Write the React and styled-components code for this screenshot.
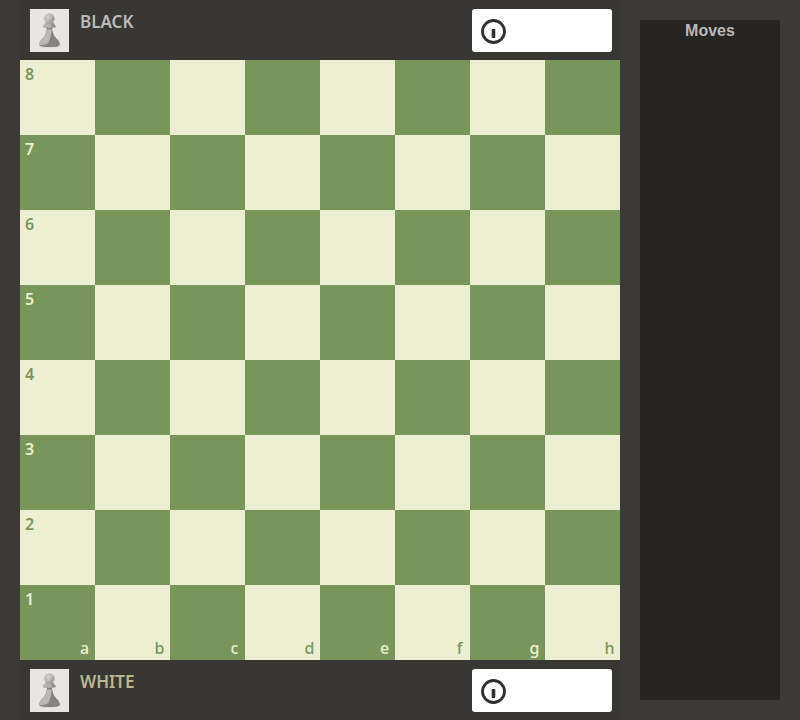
import React from "react";
import styled, { createGlobalStyle } from "styled-components";

const GlobalStyle = createGlobalStyle`
  *, *::before, *::after { box-sizing: border-box; }
  body {
    margin: 0;
    background: #3c3a36;
    font-family: "Noto Sans", "Open Sans", sans-serif;
  }
`;

const Page = styled.main`
  display: grid;
  grid-template-columns: minmax(0, 1fr) 140px;
  gap: 20px;
  padding: 0 20px;
  min-height: 100vh;
`;

const Game = styled.section`
  background: #393733;
  align-self: start;
`;

const PlayerBar = styled.div`
  display: flex;
  height: 60px;
  padding: 9px 8px 8px 10px;
`;

const Avatar = styled.svg`
  display: block;
  width: 39px;
  height: 43px;
  background: #e7e6e5;
`;

const PlayerName = styled.h2`
  margin: 0 auto 0 11px;
  padding-top: 1px;
  font-size: 17px;
  line-height: 24px;
  font-weight: 600;
  color: ${(p) => p.$color};
`;

const Clock = styled.div`
  display: flex;
  align-items: center;
  width: 140px;
  height: 43px;
  padding: 1px 0 0 9px;
  border-radius: 3px;
  background: #fff;
`;

const ClockIcon = styled.svg`
  display: block;
  width: 25px;
  height: 25px;
`;

const Board = styled.div`
  display: grid;
  grid-template-columns: repeat(8, 1fr);
  grid-template-rows: repeat(8, 1fr);
  aspect-ratio: 1;
`;

const Square = styled.div`
  display: flex;
  flex-direction: column;
  justify-content: space-between;
  min-width: 0;
  min-height: 0;
  padding: 4px 5px 2px;
  background: ${(p) => (p.$dark ? "#789659" : "#eeeed2")};
  color: ${(p) => (p.$dark ? "#eeeed2" : "#789659")};
  font-size: 16px;
  line-height: 20px;
  font-weight: 500;
`;

const Rank = styled.span`
  font-weight: 600;
`;

const File = styled.span`
  width: 11px;
  margin: auto 0 0 auto;
  text-align: center;
`;

const MovesPanel = styled.aside`
  margin: 20px 0;
  background: #272521;
`;

const MovesTitle = styled.h2`
  margin: 0;
  font-family: "Liberation Sans", Arial, sans-serif;
  font-size: 16px;
  line-height: 22px;
  font-weight: 700;
  text-align: center;
  color: #bababa;
`;

const FILES = ["a", "b", "c", "d", "e", "f", "g", "h"];
const RANKS = [8, 7, 6, 5, 4, 3, 2, 1];

function Pawn() {
  return (
    <Avatar viewBox="0 0 39 43" aria-hidden="true">
      <ellipse cx="19.5" cy="37" rx="10" ry="1.6" fill="#cfcecd" />
      <path d="M17 18h5c.5 6 2 9 5 12 2 2 3 4 3 6-2 1.8-5 2-10.5 2S11 37.8 9 36c0-2 1-4 3-6 3-3 4.5-6 5-12z" fill="#858481" />
      <path d="M17 20.5h4.5c0 5-1.5 9-2.5 12-.5 2-3 3.5-10 3.5 0-2 1-4 3-6 3-3 4.5-5.5 5-9.5z" fill="#bab9b6" />
      <path d="M16 13h7c.5 2 3 3 3 5-3 1.3-10 1.3-13 0 0-2 2.5-3 3-5z" fill="#92918e" />
      <path d="M16 13h4l2 5.5c-3 .3-7 .2-9-.5 0-2 2.5-3 3-5z" fill="#b4b3b0" />
      <circle cx="19.5" cy="9.6" r="5.2" fill="#a5a4a1" />
      <path d="M19.5 4.4a5.2 5.2 0 0 0-4 8.5c4 .5 7-2.5 7.5-7a5.2 5.2 0 0 0-3.5-1.5z" fill="#bcbbb8" />
      <ellipse cx="18" cy="7.8" rx="1.8" ry="2.2" fill="#d0cfcd" />
    </Avatar>
  );
}

function Player({ name, color }) {
  return (
    <PlayerBar>
      <Pawn />
      <PlayerName $color={color}>{name}</PlayerName>
      <Clock role="timer" aria-label={`${name} clock`}>
        <ClockIcon viewBox="0 0 25 25" aria-hidden="true">
          <circle cx="12.5" cy="12.5" r="11" fill="none" stroke="#312e2b" strokeWidth="2.8" />
          <rect x="10.7" y="10" width="3.6" height="9" rx="1" fill="#312e2b" />
        </ClockIcon>
      </Clock>
    </PlayerBar>
  );
}

export default function App() {
  return (
    <>
      <GlobalStyle />
      <Page>
        <Game>
          <Player name="BLACK" color="#bbbbb8" />
          <Board>
            {RANKS.map((rank, row) =>
              FILES.map((file, col) => (
                <Square key={file + rank} $dark={(row + col) % 2 === 1}>
                  {col === 0 && <Rank>{rank}</Rank>}
                  {row === 7 && <File>{file}</File>}
                </Square>
              ))
            )}
          </Board>
          <Player name="WHITE" color="#bab795" />
        </Game>
        <MovesPanel>
          <MovesTitle>Moves</MovesTitle>
        </MovesPanel>
      </Page>
    </>
  );
}
